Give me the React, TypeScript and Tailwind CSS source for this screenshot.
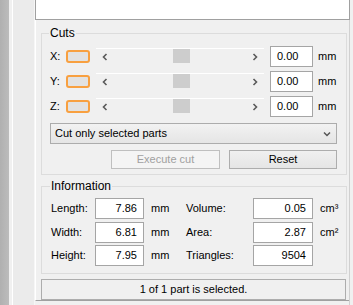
import React from 'react';

const font = { fontFamily: '"Liberation Sans", Arial, sans-serif' };

const Chevron: React.FC<{ dir: 'left' | 'right' }> = ({ dir }) => (
  <svg width="6" height="8" viewBox="0 0 6 8">
    <path
      d={dir === 'left' ? 'M4.5 1 L1.5 4 L4.5 7' : 'M1.5 1 L4.5 4 L1.5 7'}
      fill="none"
      stroke="#5a5a5a"
      strokeWidth="1.6"
    />
  </svg>
);

const Slider: React.FC = () => (
  <div className="w-[168px] h-[17px] border-t border-white flex items-center justify-between px-[6px] relative">
    <Chevron dir="left" />
    <div className="absolute left-[77px] top-[0px] w-[17px] h-[14px] bg-[#cdcdcd]" />
    <Chevron dir="right" />
  </div>
);

const CutRow: React.FC<{ axis: string }> = ({ axis }) => (
  <div className="h-[25px] flex items-center">
    <span className="w-[16px]">{axis}:</span>
    <div className="w-[24px] h-[13px] rounded-[3px] border-2 border-[#f8a040] bg-[#e2e2e2]" />
    <div className="ml-[6px]">
      <Slider />
    </div>
    <div className="ml-[6px] w-[43px] h-[21px] border border-[#a5a5a5] bg-white flex items-center pl-[6px]">0.00</div>
    <span className="ml-[5px]">mm</span>
  </div>
);

const InfoField: React.FC<{ label: string; value: string; unit?: string; labelW: string; inputW: string; unitW: string }> = ({ label, value, unit, labelW, inputW, unitW }) => (
  <div className="flex items-center h-[21px]">
    <span className={labelW}>{label}</span>
    <div className={`${inputW} h-[21px] border border-[#a5a5a5] bg-white flex items-center justify-end pr-[6px]`}>{value}</div>
    <span className={`${unitW} pl-[7px]`}>{unit}</span>
  </div>
);

export default function App() {
  return (
    <div className="w-[353px] h-[305px] flex bg-[#f0f0f0] text-[11px] text-black overflow-hidden" style={font}>
      <div className="w-[9px] h-full bg-gradient-to-r from-[#b0b0b0] to-[#bcbcbc]" />
      <div className="w-[4px] h-full bg-[#f0f0f0] border-r border-white" />
      <div className="w-[22px] h-full bg-[#ebebeb] border-r border-[#f6f6f6]" />
      <div className="flex-1 flex flex-col border-r border-[#d0d0d0] mr-[3px]">
        <div className="h-[20px] bg-white border-b border-l border-r border-[#a0a0a0] mr-[-1px]" />
        <div className="flex-1 flex flex-col pl-[5px] pr-[2px] border-l border-white border-b border-b-[#a0a0a0] mb-[4px]">
          <fieldset className="mt-[6px] border border-[#dcdcdc] pl-[8px] pr-[9px] pb-[5px]">
            <legend className="ml-[-1px] px-[1px] text-[12px] leading-[14px]">Cuts</legend>
            <div className="mt-[4px]">
              <CutRow axis="X" />
              <CutRow axis="Y" />
              <CutRow axis="Z" />
            </div>
            <div className="mt-[4px] h-[21px] border border-[#acacac] bg-gradient-to-b from-[#f2f2f2] to-[#e5e5e5] flex items-center justify-between pl-[4px] pr-[5px]">
              <span>Cut only selected parts</span>
              <svg width="8" height="6" viewBox="0 0 8 6">
                <path d="M1 1.5 L4 4.5 L7 1.5" fill="none" stroke="#555" strokeWidth="1.5" />
              </svg>
            </div>
            <div className="mt-[6px] flex justify-end gap-[9px]">
              <div className="w-[109px] h-[19px] border border-[#bfbfbf] bg-[#f4f4f4] flex items-center justify-center text-[#a0a0a0]">Execute cut</div>
              <div className="w-[108px] h-[19px] border border-[#adadad] bg-gradient-to-b from-[#f0f0f0] to-[#e5e5e5] flex items-center justify-center">Reset</div>
            </div>
          </fieldset>
          <fieldset className="mt-[4px] border border-[#dcdcdc] pl-[9px] pb-[7px]">
            <legend className="ml-[-1px] px-[1px] text-[12px] leading-[14px]">Information</legend>
            <div className="mt-[5px] flex">
              <div className="flex flex-col gap-[2.5px]">
                <InfoField label="Length:" value="7.86" unit="mm" labelW="w-[44px]" inputW="w-[49px]" unitW="w-[42px]" />
                <InfoField label="Width:" value="6.81" unit="mm" labelW="w-[44px]" inputW="w-[49px]" unitW="w-[42px]" />
                <InfoField label="Height:" value="7.95" unit="mm" labelW="w-[44px]" inputW="w-[49px]" unitW="w-[42px]" />
              </div>
              <div className="flex flex-col gap-[2.5px]">
                <InfoField label="Volume:" value="0.05" unit="cm³" labelW="w-[67px]" inputW="w-[60px]" unitW="w-[30px]" />
                <InfoField label="Area:" value="2.87" unit="cm²" labelW="w-[67px]" inputW="w-[60px]" unitW="w-[30px]" />
                <InfoField label="Triangles:" value="9504" labelW="w-[67px]" inputW="w-[60px]" unitW="w-[30px]" />
              </div>
            </div>
          </fieldset>
          <div className="mt-[5px] w-[305px] h-[21px] border border-[#adadad] bg-[#f0f0f0] flex items-center justify-center">
            1 of 1 part is selected.
          </div>
        </div>
      </div>
    </div>
  );
}
